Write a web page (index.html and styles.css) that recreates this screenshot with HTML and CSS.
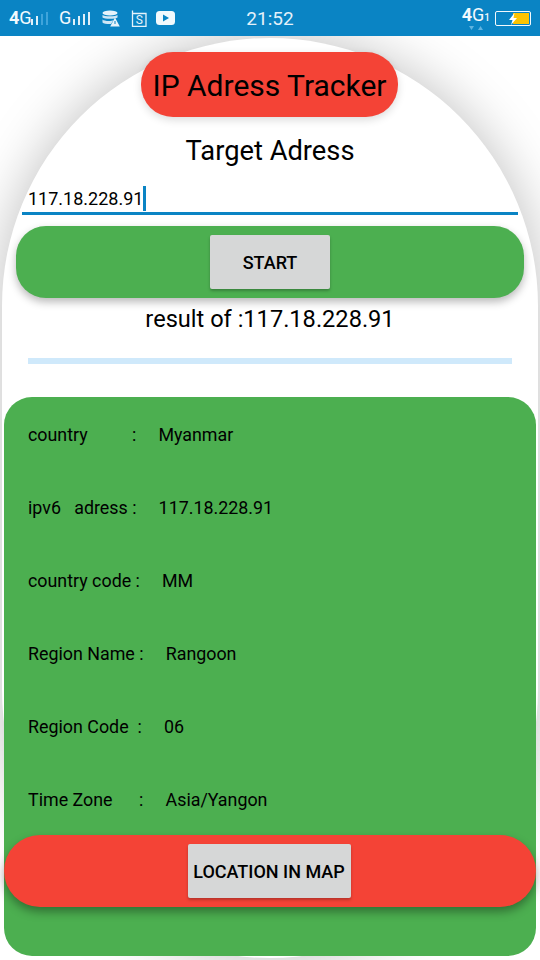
FILE: index.html
```html
<!DOCTYPE html>
<html lang="en">
<head>
  <meta charset="UTF-8">
  <meta name="viewport" content="width=device-width, initial-scale=1.0">
  <title>IP Adress Tracker</title>
  <link rel="stylesheet" href="styles.css">
</head>
<body>
  <div class="status-bar">
    <div class="status-left">
      <span class="net net-first">4<span class="net-g">G</span></span>
      <svg class="bars" width="20" height="16" viewBox="0 0 20 16">
        <rect x="0" y="8" width="2" height="6" fill="#dff0fa"/>
        <rect x="5" y="5" width="2" height="9" fill="#dff0fa"/>
        <rect x="10" y="3" width="2" height="11" fill="#3fa4db"/>
        <rect x="15" y="1" width="2" height="13" fill="#3fa4db"/>
      </svg>
      <span class="net net-second">G</span>
      <svg class="bars" width="20" height="16" viewBox="0 0 20 16">
        <rect x="0" y="8" width="2" height="6" fill="#dff0fa"/>
        <rect x="5" y="5" width="2" height="9" fill="#dff0fa"/>
        <rect x="10" y="3" width="2" height="11" fill="#dff0fa"/>
        <rect x="15" y="1" width="2" height="13" fill="#dff0fa"/>
      </svg>
      <svg class="icon-db" width="18" height="17" viewBox="0 0 18 17">
        <ellipse cx="8" cy="3" rx="7.5" ry="2.6" fill="#e6f3fb"/>
        <path d="M.5 5c1.500 1.800 13.500 1.800 15 0v2.500c-1.500 1.800-13.500 1.800-15 0z" fill="#cfe6f5"/>
        <path d="M.5 9.500c1.500 1.800 9 1.800 11 .8L9 14c-3 .2-7.500-.3-8.500-1.500z" fill="#cfe6f5"/>
        <path d="M13 7.500l4.800 9H8.200z" fill="#e6f3fb"/>
        <rect x="12.500" y="11" width="1" height="3" fill="#0a84c4"/>
      </svg>
      <svg class="icon-s" width="16" height="17" viewBox="0 0 16 17">
        <path d="M1.500 3.500h13.500v13H1.500zM1.500 3.500V.5" fill="none" stroke="#e6f3fb" stroke-width="1.300"/>
        <text x="8.200" y="14.200" text-anchor="middle" font-family="Roboto, sans-serif" font-size="12" fill="#e6f3fb">S</text>
      </svg>
      <svg class="icon-play" width="19" height="14" viewBox="0 0 19 14">
        <rect width="19" height="14" rx="3.500" fill="#f2f9fd"/>
        <path d="M7 3.500l6 3.500-6 3.500z" fill="#0a84c4"/>
      </svg>
    </div>
    <div class="status-time">21:52</div>
    <div class="status-right">
      <div class="net-stack">
        <span class="net net-right">4<span class="net-g">G</span><span class="net-one">1</span></span>
        <svg class="net-arrows" width="14" height="4" viewBox="0 0 14 4">
          <path d="M0 0h5L2.500 4zM9 4h5L11.500 0z" fill="#5fb3e0"/>
        </svg>
      </div>
      <div class="battery">
        <svg class="bolt" width="10" height="12" viewBox="0 0 10 12">
          <path d="M6.500 0L1 7h3.500L3 12l6-7H5.500z" fill="#fff"/>
        </svg>
        <div class="battery-fill"></div>
      </div>
    </div>
  </div>

  <div class="oval">
    <div class="title-pill">IP Adress Tracker</div>
    <h2 class="target-title">Target Adress</h2>
    <div class="input-line">
      <span class="input-text">117.18.228.91</span><span class="cursor"></span>
    </div>
    <div class="start-bar">
      <button class="btn btn-start">START</button>
    </div>
    <div class="result-title">result of :117.18.228.91</div>
    <div class="progress-line"></div>

    <div class="info-card">
      <div class="info-row">country          :     Myanmar</div>
      <div class="info-row">ipv6   adress :     117.18.228.91</div>
      <div class="info-row">country code :     MM</div>
      <div class="info-row">Region Name :     Rangoon</div>
      <div class="info-row">Region Code  :     06</div>
      <div class="info-row">Time Zone      :     Asia/Yangon</div>
      <div class="map-bar">
        <button class="btn btn-map">LOCATION IN MAP</button>
      </div>
    </div>
  </div>
</body>
</html>
```
FILE: styles.css
```css
:root {
  --blue: #0a84c4;
  --green: #4caf50;
  --red: #f44336;
  --grey-btn: #d6d7d7;
}

* {
  box-sizing: border-box;
  margin: 0;
  padding: 0;
}

html, body {
  height: 960px;
  overflow: hidden;
}

body {
  font-family: Roboto, "Liberation Sans", sans-serif;
  color: #000;
  background: #fff;
}

/* status bar */
.status-bar {
  position: relative;
  z-index: 2;
  height: 36px;
  background: var(--blue);
  display: flex;
  align-items: center;
  color: #f2f9fd;
}

.status-left {
  flex: 1;
  display: flex;
  align-items: center;
  padding-left: 9px;
}

.net {
  font-size: 18px;
  line-height: 18px;
}

.net-first, .net-right {
  font-weight: 700;
}

.net-g {
  font-weight: 400;
}

.net-first {
  width: 22px;
}

.net-second {
  width: 14px;
  margin-left: 8px;
}

.bars {
  margin-top: 1px;
}

.icon-db {
  margin-left: 9px;
}

.icon-s {
  margin-left: 11px;
}

.icon-play {
  margin-left: 9px;
}

.status-time {
  font-size: 19px;
  color: #e3f1fa;
}

.status-right {
  flex: 1;
  display: flex;
  justify-content: flex-end;
  align-items: center;
  padding-right: 9px;
}

.net-stack {
  display: flex;
  flex-direction: column;
  align-items: center;
  margin-top: -1px;
}

.net-arrows {
  margin-top: -1px;
}

.net-one {
  font-size: 10px;
  font-weight: 500;
}

.battery {
  position: relative;
  width: 36px;
  height: 15px;
  margin-left: 5px;
  border: 1px solid #f2f9fd;
  border-radius: 2px;
  display: flex;
  justify-content: flex-end;
  padding: 1px;
}

.battery-fill {
  width: 16px;
  background: #fdc400;
}

.bolt {
  position: absolute;
  left: 12px;
  top: 1px;
}

/* big white shape */
.oval {
  width: 536px;
  height: 920px;
  margin: 2px 0 0 2px;
  padding-top: 14px;
  background: #fff;
  border-radius: 268px;
  box-shadow: 0 0 55px rgba(0, 0, 0, 0.26);
  display: flex;
  flex-direction: column;
  align-items: center;
}

.title-pill {
  width: 257px;
  height: 65px;
  margin-right: 1px;
  background: var(--red);
  border-radius: 32px;
  font-size: 30px;
  line-height: 67px;
  text-align: center;
  box-shadow: 0 3px 8px rgba(0, 0, 0, 0.14);
}

.target-title {
  margin-top: 17px;
  font-size: 27.3px;
  font-weight: 400;
  line-height: 34px;
}

.input-line {
  align-self: flex-start;
  width: 496px;
  height: 33px;
  margin: 14px 0 0 20px;
  padding: 3px 0 0 6px;
  border-bottom: 3px solid var(--blue);
  display: flex;
  align-items: center;
  font-size: 18px;
}

.cursor {
  width: 3px;
  height: 25px;
  background: var(--blue);
}

.start-bar,
.map-bar {
  display: flex;
  align-items: center;
  justify-content: center;
  height: 72px;
}

.start-bar {
  width: 508px;
  margin-top: 11px;
  background: var(--green);
  border-radius: 30px;
  box-shadow: 0 4px 8px rgba(0, 0, 0, 0.28);
}

.btn {
  border: none;
  background: var(--grey-btn);
  border-radius: 2px;
  font-family: inherit;
  font-size: 18px;
  font-weight: 500;
  color: #000;
  box-shadow: 0 2px 3px rgba(0, 0, 0, 0.25);
}

.btn-start {
  width: 120px;
  height: 54px;
}

.result-title {
  margin-top: 5px;
  font-size: 23.6px;
  line-height: 32px;
}

.progress-line {
  width: 484px;
  height: 6px;
  margin-top: 23px;
  background: #cfe9fb;
}

.info-card {
  width: 532px;
  height: 559px;
  margin-top: 33px;
  padding-top: 1px;
  background: var(--green);
  border-radius: 28px;
}

.info-row {
  height: 73px;
  padding-left: 24px;
  font-size: 17.85px;
  line-height: 73px;
  white-space: pre;
}

.map-bar {
  margin-top: -1px;
  background: var(--red);
  border-radius: 36px;
  box-shadow: 0 5px 10px rgba(0, 0, 0, 0.35);
}

.btn-map {
  width: 163px;
  height: 54px;
  margin-right: 2px;
}
```
